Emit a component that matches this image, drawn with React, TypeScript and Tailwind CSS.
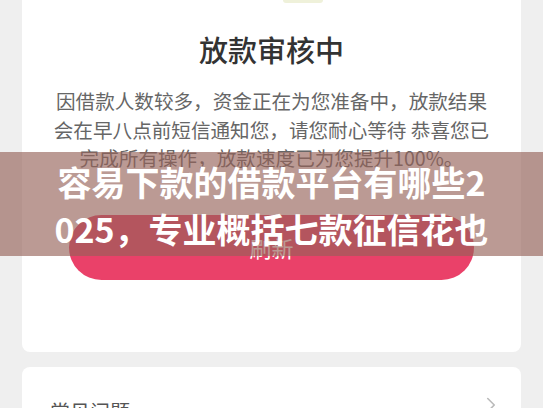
import { ChevronRight } from "lucide-react";

const lines = [
  "因借款人数较多，资金正在为您准备中，放款结果",
  "会在早八点前短信通知您，请您耐心等待 恭喜您已",
  "完成所有操作，放款速度已为您提升100%。",
];

const titleLines = ["容易下款的借款平台有哪些2", "025，专业概括七款征信花也"];

export default function App() {
  return (
    <div className="relative w-[543px] h-[408px] overflow-hidden bg-[#efefef] font-['Noto_Sans_CJK_SC',sans-serif]">
      <div className="flex flex-col px-[22px]">
        {/* status card */}
        <div className="flex flex-col items-center bg-white rounded-b-[8px] pb-[72px]">
          <div className="self-start ml-[261px] h-[3px] w-[40px] rounded-b-full bg-[#eff1da]" />
          <h1 className="mt-[31px] text-[29px] leading-[30px] font-medium text-[#333333]">
            放款审核中
          </h1>
          <div className="mt-[23px] text-center text-[19.6px] leading-[28.5px] text-[#666666]">
            {lines.map((line) => (
              <p key={line} className="whitespace-pre">
                {line}
              </p>
            ))}
          </div>
          <button className="mt-[42px] h-[65px] w-[405px] rounded-full bg-[#ea4169] text-[22px] text-white">
            刷新
          </button>
        </div>

        {/* faq card */}
        <div className="mt-[15px] h-[100px] flex items-start justify-between bg-white rounded-t-[8px] pt-[35px] pl-[28px] pr-[17px]">
          <span className="text-[20px] leading-[20px] text-[#555555]">常见问题</span>
          <ChevronRight size={26} strokeWidth={1.5} className="-mt-[9.5px] text-[#bbbbbb]" />
        </div>
      </div>

      {/* title overlay */}
      <div className="absolute left-0 right-0 top-[152px] h-[104px] flex flex-col items-center justify-center pt-[3px] bg-[rgba(149,97,88,0.64)] text-white font-bold text-[34px] leading-[46.5px]">
        {titleLines.map((t) => (
          <div key={t} className="whitespace-pre">
            {t}
          </div>
        ))}
      </div>
    </div>
  );
}
